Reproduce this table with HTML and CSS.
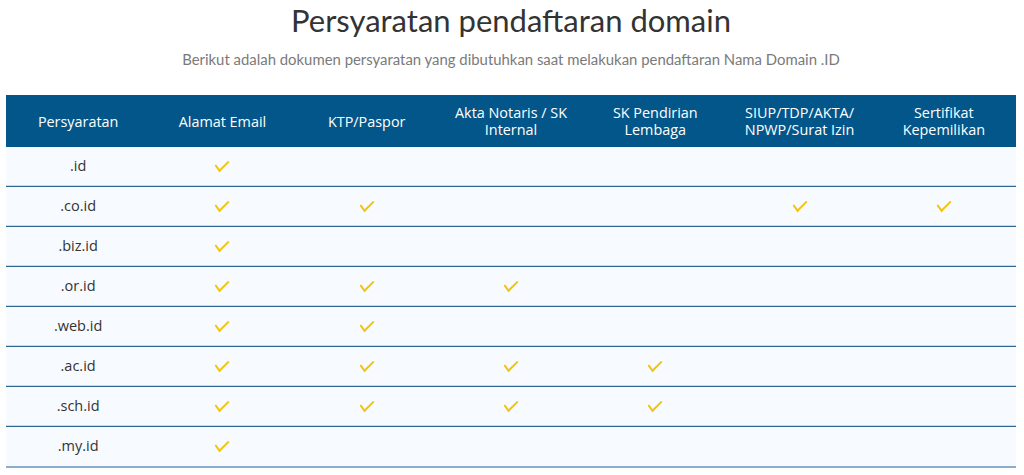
FILE: index.html
```html
<!DOCTYPE html>
<html lang="id">
<head>
<meta charset="utf-8">
<title>Persyaratan pendaftaran domain</title>
<link rel="stylesheet" href="styles.css">
</head>
<body>
<div class="page">
  <h1 class="title">Persyaratan pendaftaran domain</h1>
  <p class="subtitle">Berikut adalah dokumen persyaratan yang dibutuhkan saat melakukan pendaftaran Nama Domain .ID</p>
  <table class="req">
    <thead>
      <tr>
        <th>Persyaratan</th>
        <th>Alamat Email</th>
        <th>KTP/Paspor</th>
        <th>Akta Notaris / SK<br>Internal</th>
        <th>SK Pendirian<br>Lembaga</th>
        <th>SIUP/TDP/AKTA/<br>NPWP/Surat Izin</th>
        <th>Sertifikat<br>Kepemilikan</th>
      </tr>
    </thead>
    <tbody>
      <tr><td>.id</td><td><span class="ck"></span></td><td></td><td></td><td></td><td></td><td></td></tr>
      <tr><td>.co.id</td><td><span class="ck"></span></td><td><span class="ck"></span></td><td></td><td></td><td><span class="ck"></span></td><td><span class="ck"></span></td></tr>
      <tr><td>.biz.id</td><td><span class="ck"></span></td><td></td><td></td><td></td><td></td><td></td></tr>
      <tr><td>.or.id</td><td><span class="ck"></span></td><td><span class="ck"></span></td><td><span class="ck"></span></td><td></td><td></td><td></td></tr>
      <tr><td>.web.id</td><td><span class="ck"></span></td><td><span class="ck"></span></td><td></td><td></td><td></td><td></td></tr>
      <tr><td>.ac.id</td><td><span class="ck"></span></td><td><span class="ck"></span></td><td><span class="ck"></span></td><td><span class="ck"></span></td><td></td><td></td></tr>
      <tr><td>.sch.id</td><td><span class="ck"></span></td><td><span class="ck"></span></td><td><span class="ck"></span></td><td><span class="ck"></span></td><td></td><td></td></tr>
      <tr class="last"><td>.my.id</td><td><span class="ck"></span></td><td></td><td></td><td></td><td></td><td></td></tr>
    </tbody>
  </table>
</div>
</body>
</html>
```
FILE: styles.css
```css
html, body {
  margin: 0;
  padding: 0;
  background: #ffffff;
}
.page {
  padding: 0 8px 0 6px;
  font-family: "Lato", "Open Sans", sans-serif;
}
.title {
  margin: 0;
  padding-top: 2px;
  text-align: center;
  font-size: 31px;
  line-height: 36px;
  font-weight: 400;
  color: #333333;
}
.subtitle {
  margin: 12px 0 0 0;
  text-align: center;
  font-size: 14.9px;
  line-height: 18px;
  color: #7a7a7a;
}
.req {
  margin-top: 27px;
  width: 100%;
  border-collapse: collapse;
  table-layout: fixed;
  font-family: "Open Sans", sans-serif;
}
.req th {
  background: #03568a;
  color: #ffffff;
  font-weight: 400;
  font-size: 14.4px;
  line-height: 17px;
  height: 52px;
  padding: 0 4px;
  text-align: center;
  vertical-align: middle;
}
.req td {
  background: #f7fbff;
  height: 36px;
  padding: 0 0 3px 0;
  text-align: center;
  vertical-align: middle;
  font-size: 14.5px;
  color: #333333;
  border-bottom: 1px solid #2d6792;
  box-shadow: inset 0 -1px 0 #c8d8e6;
}
.req tr.last td {
  border-bottom: 2px solid #8aaecb;
  box-shadow: none;
}
.ck {
  display: inline-block;
  width: 12px;
  height: 6px;
  border-left: 2.5px solid #f2c40f;
  border-bottom: 2.5px solid #f2c40f;
  transform: rotate(-45deg) skewX(-8deg);
  position: relative;
  top: -3px;
}
```
